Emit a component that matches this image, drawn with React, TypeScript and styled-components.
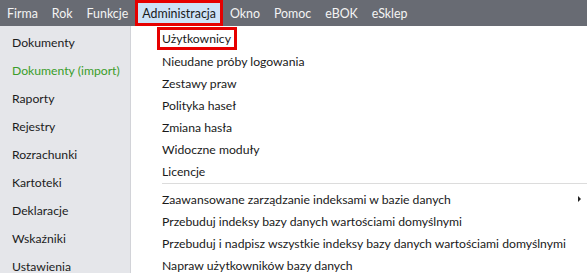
import React from 'react';
import styled, { createGlobalStyle } from 'styled-components';

const GlobalStyle = createGlobalStyle`
  html, body {
    margin: 0;
    padding: 0;
    background: #ffffff;
  }
  body {
    font-family: Lato, 'Open Sans', sans-serif;
    font-size: 12.2px;
  }
`;

const Page = styled.div`
  width: 587px;
  height: 273px;
  overflow: hidden;
  display: flex;
  flex-direction: column;
  background: #ffffff;
`;

const MenuBar = styled.div`
  height: 26px;
  flex-shrink: 0;
  display: flex;
  align-items: stretch;
  background: #686b73;
`;

const MenuItem = styled.div<{ active?: boolean }>`
  display: flex;
  align-items: center;
  padding: 0 7px;
  color: ${(p) => (p.active ? '#1a1a1a' : '#f4f4f4')};
  background: ${(p) => (p.active ? '#cde2f7' : 'transparent')};
  outline: ${(p) => (p.active ? '3px solid #e60000' : 'none')};
  outline-offset: -3px;
  white-space: nowrap;
  font-size: 12.4px;
`;

const Body = styled.div`
  flex: 1;
  display: flex;
  min-height: 0;
`;

const Sidebar = styled.div`
  width: 130px;
  flex-shrink: 0;
  background: #e5e6ea;
  border-right: 1px solid #d2d3d8;
  display: flex;
  flex-direction: column;
  padding-top: 2px;
`;

const SideItem = styled.div<{ highlight?: boolean }>`
  height: 28px;
  flex-shrink: 0;
  display: flex;
  align-items: center;
  padding-left: 12px;
  color: ${(p) => (p.highlight ? '#3a9d2a' : '#1c1c1c')};
  white-space: nowrap;
`;

const Dropdown = styled.div`
  flex: 1;
  display: flex;
  flex-direction: column;
  padding: 1px 0 0 26px;
`;

const DropItem = styled.div<{ boxed?: boolean }>`
  height: 22px;
  flex-shrink: 0;
  display: flex;
  align-items: center;
  justify-content: space-between;
  padding: 0 6px 0 5px;
  color: #1a1a1a;
  white-space: nowrap;
  ${(p) =>
    p.boxed &&
    `
    align-self: flex-start;
    height: 23px;
    width: 80px;
    box-sizing: border-box;
    border: 3px solid #e60000;
    padding-left: 2px;
  `}
`;

const Separator = styled.div`
  height: 1px;
  flex-shrink: 0;
  background: #dcdcdc;
  margin: 1px 0 4px 5px;
`;

const Arrow = styled.span`
  width: 0;
  height: 0;
  border-top: 3px solid transparent;
  border-bottom: 3px solid transparent;
  border-left: 3px solid #222;
`;

const menus = ['Firma', 'Rok', 'Funkcje', 'Administracja', 'Okno', 'Pomoc', 'eBOK', 'eSklep'];

const sideItems = [
  'Dokumenty',
  'Dokumenty (import)',
  'Raporty',
  'Rejestry',
  'Rozrachunki',
  'Kartoteki',
  'Deklaracje',
  'Wskaźniki',
  'Ustawienia',
];

const firstGroup = [
  'Nieudane próby logowania',
  'Zestawy praw',
  'Polityka haseł',
  'Zmiana hasła',
  'Widoczne moduły',
  'Licencje',
];

const secondGroup = [
  'Przebuduj indeksy bazy danych wartościami domyślnymi',
  'Przebuduj i nadpisz wszystkie indeksy bazy danych wartościami domyślnymi',
  'Napraw użytkowników bazy danych',
];

const App = () => (
  <Page>
    <GlobalStyle />
    <MenuBar>
      {menus.map((m) => (
        <MenuItem key={m} active={m === 'Administracja'}>
          {m}
        </MenuItem>
      ))}
    </MenuBar>
    <Body>
      <Sidebar>
        {sideItems.map((s) => (
          <SideItem key={s} highlight={s === 'Dokumenty (import)'}>
            {s}
          </SideItem>
        ))}
      </Sidebar>
      <Dropdown>
        <DropItem boxed>Użytkownicy</DropItem>
        {firstGroup.map((d) => (
          <DropItem key={d}>{d}</DropItem>
        ))}
        <Separator />
        <DropItem>
          Zaawansowane zarządzanie indeksami w bazie danych
          <Arrow />
        </DropItem>
        {secondGroup.map((d) => (
          <DropItem key={d}>{d}</DropItem>
        ))}
      </Dropdown>
    </Body>
  </Page>
);

export default App;
